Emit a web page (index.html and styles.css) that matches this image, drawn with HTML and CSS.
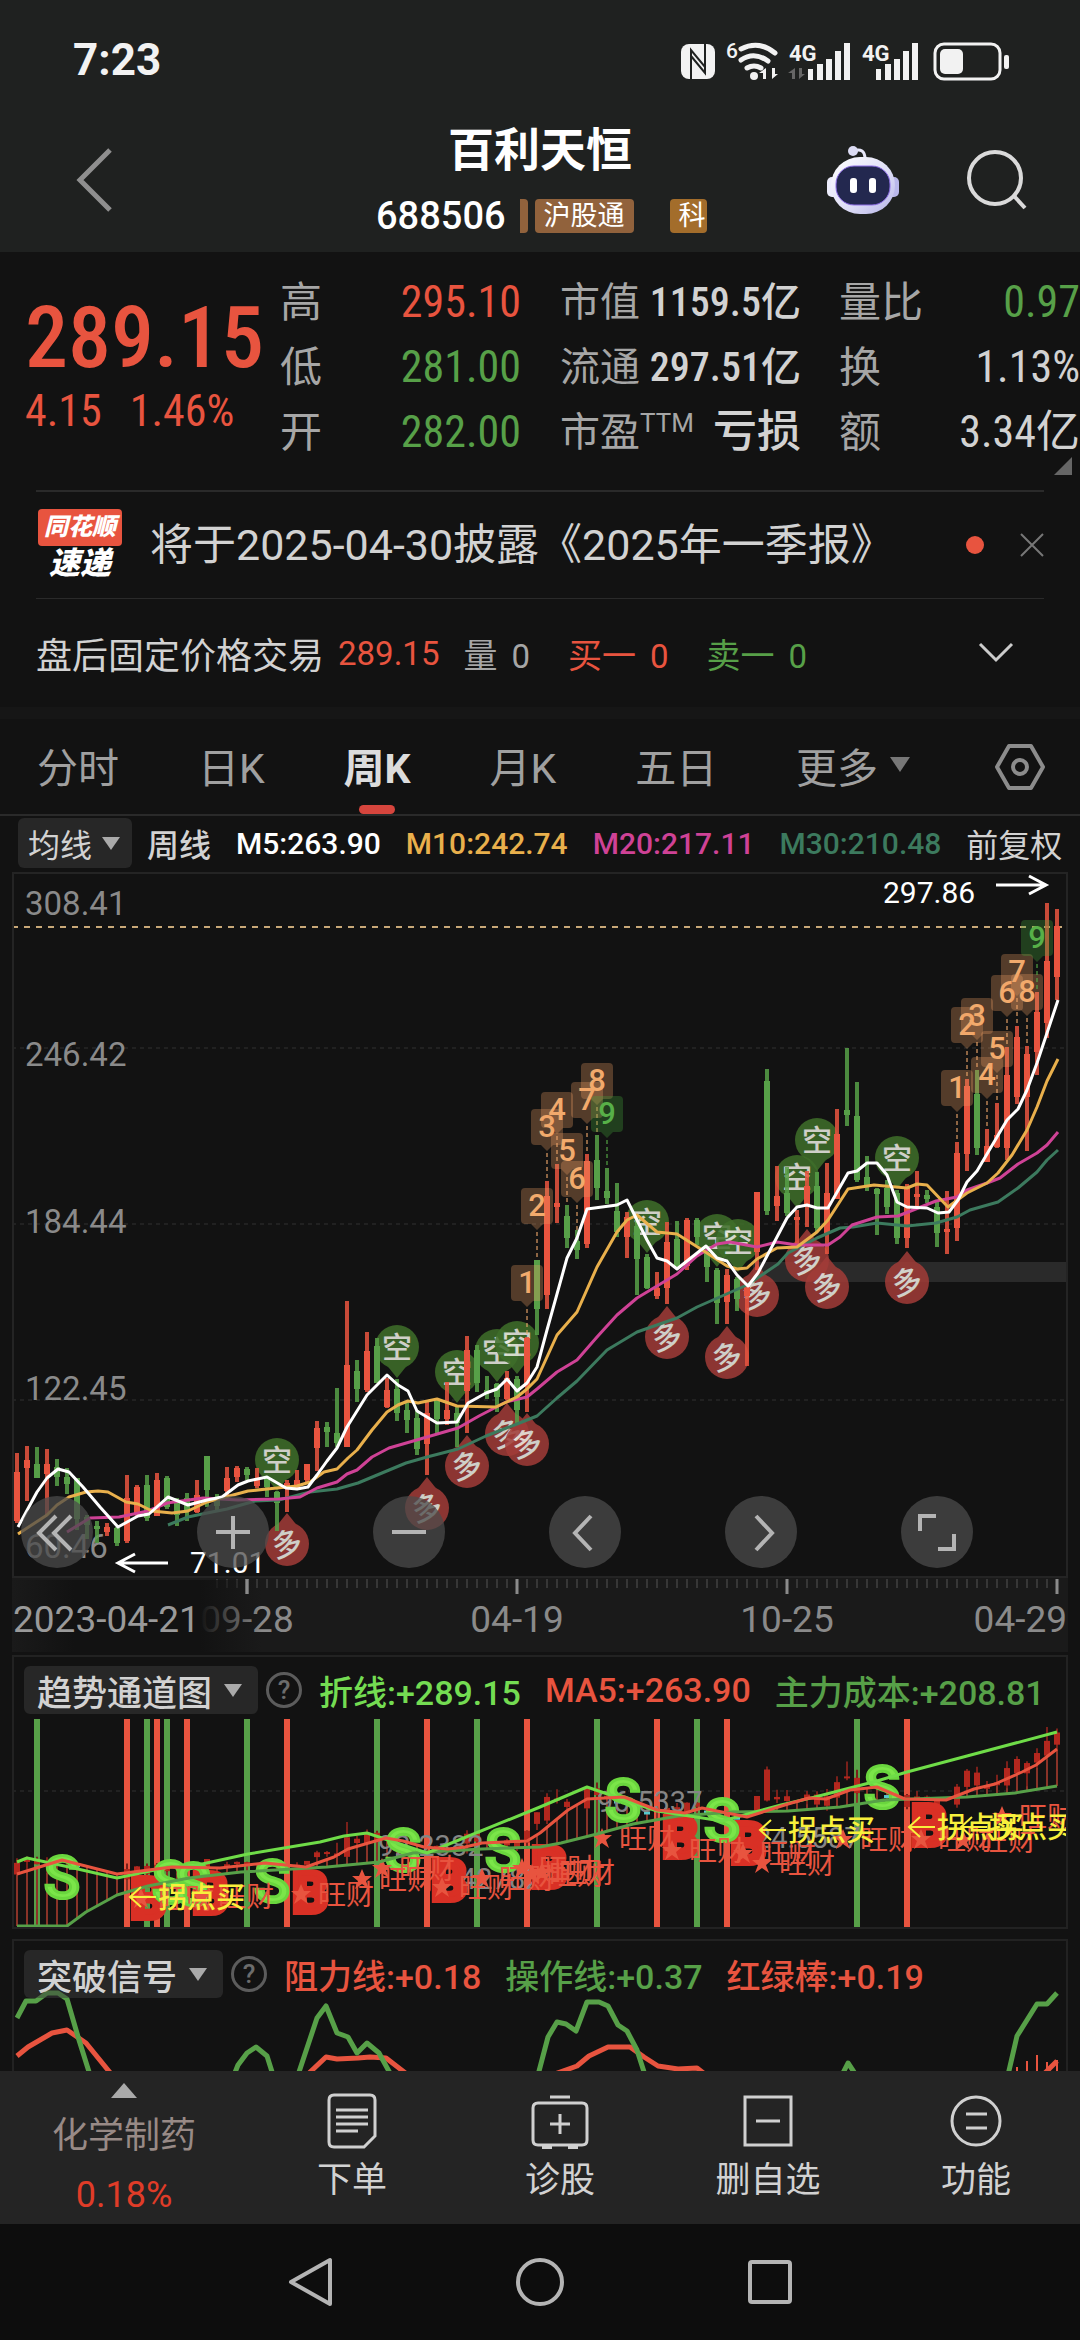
FILE: index.html
```html
<!DOCTYPE html>
<html lang="zh-CN">
<head>
<meta charset="utf-8">
<meta name="viewport" content="width=device-width, initial-scale=1">
<title>百利天恒 688506</title>
<link rel="stylesheet" href="styles.css">
</head>
<body>
<header class="top">
  <div class="status">
    <span class="clock">7:23</span>
    <svg class="status-icons" viewBox="680 36 330 44" aria-hidden="true">
      <g fill="#f2f2f2">
        <rect x="681" y="42" width="34" height="35" rx="8"/>
        <path d="M691 77V48l14 17v-23M705 42v29L691 54" fill="none" stroke="#1f2120" stroke-width="2"/>
        <circle cx="754" cy="74" r="4"/>
        <path d="M766 66v11h-3v-6h-4zM772 66v11l6-5h-3v-6z"/>
        <path d="M808 67h5v11h-5zM817 62h6v16h-6zM826 57h6v21h-6zM835 49h6v29h-6zM844 41h6v37h-6zM876 67h5v11h-5zM885 62h6v16h-6zM894 57h6v21h-6zM903 49h6v29h-6zM912 41h6v37h-6z"/>
        <rect x="940" y="47" width="23" height="25" rx="5"/><rect x="1004" y="53" width="5" height="14" rx="2"/>
        <text x="726" y="56" font-size="21" font-weight="500">6</text>
        <text x="789" y="59" font-size="22" font-weight="700">4G</text>
        <text x="862" y="59" font-size="22" font-weight="700">4G</text>
      </g>
      <path d="M795 66v11h-3v-6h-4zM799 66v11l6-5h-3v-6z" fill="#666"/>
      <g fill="none" stroke="#f2f2f2" stroke-linecap="round">
        <path d="M741 47q18-9 34 4M741 58q13-9 27 1M747 66q7-4 14 0" stroke-width="5"/>
        <rect x="935" y="42" width="65" height="35" rx="9" stroke-width="3"/>
      </g>
    </svg>
  </div>
  <div class="titlebar">
    <button class="icon-btn back" aria-label="返回"><svg width="36" height="64" viewBox="0 0 36 64"><path d="M34 2L4 32l30 30" fill="none" stroke="#8f8f8f" stroke-width="5"/></svg></button>
    <div class="title">
      <h1>百利天恒</h1>
      <div class="code"><span class="code-num">688506</span><i class="sliver"></i><span class="tag">沪股通</span><span class="tag tag-gold">科</span></div>
    </div>
    <button class="icon-btn robot" aria-label="助手"><svg width="74" height="70" viewBox="0 0 74 70">
      <defs><linearGradient id="shell" x1="0" y1="0" x2="1" y2="1"><stop offset="0" stop-color="#fff"/><stop offset=".6" stop-color="#dcdcf6"/><stop offset="1" stop-color="#b4b2e6"/></linearGradient></defs>
      <path d="M27 6q12-4 12 8" fill="none" stroke="#e8e8fa" stroke-width="3"/><circle cx="27" cy="6" r="5" fill="#dcdcf4"/>
      <rect x="1" y="32" width="12" height="20" rx="5" fill="#ececfb"/><rect x="61" y="32" width="12" height="20" rx="5" fill="#b9b7ea"/>
      <rect x="5" y="12" width="64" height="57" rx="29" fill="url(#shell)"/>
      <rect x="10" y="21" width="54" height="39" rx="18" fill="#23284f" stroke="#8f6fe8" stroke-width="1"/>
      <rect x="24" y="33" width="7" height="15" rx="3" fill="#fff"/><rect x="43" y="33" width="7" height="15" rx="3" fill="#fff"/></svg></button>
    <button class="icon-btn" aria-label="搜索"><svg width="62" height="62" viewBox="0 0 62 62"><circle cx="29" cy="29" r="26" fill="none" stroke="#dadada" stroke-width="4"/><path d="M48 47l11 12" stroke="#dadada" stroke-width="4"/></svg></button>
  </div>
</header>

<main>
  <section class="quote">
    <div class="price"><strong>289.15</strong><p><span>4.15</span><span>1.46%</span></p></div>
    <dl>
      <div><dt>高</dt><dd class="up">295.10</dd></div>
      <div><dt>低</dt><dd class="down">281.00</dd></div>
      <div><dt>开</dt><dd class="down">282.00</dd></div>
    </dl>
    <dl class="medium">
      <div><dt>市值</dt><dd>1159.5亿</dd></div>
      <div><dt>流通</dt><dd>297.51亿</dd></div>
      <div><dt>市盈<sup>TTM</sup></dt><dd class="word">亏损</dd></div>
    </dl>
    <dl>
      <div><dt>量比</dt><dd class="down">0.97</dd></div>
      <div><dt>换</dt><dd>1.13%</dd></div>
      <div><dt>额</dt><dd>3.34亿</dd></div>
    </dl>
    <i class="corner"></i>
  </section>

  <section class="notice">
    <div class="logo"><span class="logo-top">同花顺</span><span class="logo-bottom">速递</span></div>
    <a href="#report">将于2025-04-30披露《2025年一季报》</a>
    <i class="dot"></i>
    <button class="icon-btn" aria-label="关闭"><svg width="24" height="24" viewBox="0 0 24 24"><path d="M1 1l22 22M23 1L1 23" stroke="#777" stroke-width="2"/></svg></button>
  </section>

  <section class="after">
    <span class="after-name">盘后固定价格交易</span><span class="num up">289.15</span>
    <span class="pair muted"><b>量</b>0</span><span class="pair up"><b>买一</b>0</span><span class="pair down"><b>卖一</b>0</span>
    <button class="icon-btn expand" aria-label="展开"><svg width="36" height="22" viewBox="0 0 36 22"><path d="M2 2l16 16L34 2" fill="none" stroke="#ccc" stroke-width="3"/></svg></button>
  </section>

  <nav class="tabs">
    <button>分时</button><button>日K</button><button class="active">周K</button><button>月K</button><button>五日</button><button class="more">更多<i class="tri"></i></button>
    <button aria-label="设置" class="gear"><svg width="50" height="46" viewBox="0 0 50 46"><path d="M14 2h22l12 21-12 21H14L2 23z" fill="none" stroke="#8c8c8c" stroke-width="4" stroke-linejoin="round"/><circle cx="25" cy="23" r="7" fill="none" stroke="#8c8c8c" stroke-width="4"/></svg></button>
  </nav>

  <div class="ma-row">
    <button class="pill">均线<i class="tri"></i></button><b>周线</b><span class="ma w">M5:263.90</span><span class="ma y">M10:242.74</span><span class="ma p">M20:217.11</span><span class="ma g">M30:210.48</span><button class="plain">前复权</button>
  </div>

  <section class="kline">
    <svg id="kline" viewBox="14 874 1052 702"></svg>
    <div class="tools">
      <button aria-label="最早"><svg viewBox="0 0 72 72"><path d="M35 20L18 37l17 17M50 20L33 37l17 17"/></svg></button>
      <button aria-label="放大"><svg viewBox="0 0 72 72"><path d="M36 20v33M19 36h34"/></svg></button>
      <button aria-label="缩小"><svg viewBox="0 0 72 72"><path d="M19 36h34"/></svg></button>
      <button aria-label="左移"><svg viewBox="0 0 72 72"><path d="M42 20L26 37l16 17"/></svg></button>
      <button aria-label="右移"><svg viewBox="0 0 72 72"><path d="M31 20l16 17-16 17"/></svg></button>
      <button aria-label="全屏"><svg viewBox="0 0 72 72"><path d="M35 20H19v15M53 38v15H37"/></svg></button>
    </div>
  </section>
  <div class="axis"><svg id="axis" viewBox="12 1576 1056 74"></svg></div>

  <section class="panel">
    <header>
      <button class="pill big">趋势通道图<i class="tri"></i></button><button class="help">?</button>
      <span class="lime">折线:+289.15</span><span class="up">MA5:+263.90</span><span class="down">主力成本:+208.81</span>
    </header>
    <svg id="trend" viewBox="14 1717 1052 210"></svg>
  </section>

  <section class="panel stack">
    <header>
      <button class="pill big">突破信号<i class="tri"></i></button><button class="help">?</button>
      <span class="up">阻力线:+0.18</span><span class="down">操作线:+0.37</span><span class="up">红绿棒:+0.19</span>
    </header>
    <svg id="signal" viewBox="14 1941 1052 132"></svg>
  </section>
</main>

<footer class="bar">
  <a href="#sector" class="sector"><i class="tri-up"></i><span>化学制药</span><em>0.18%</em></a>
  <button><svg width="52" height="56" viewBox="0 0 52 56"><path d="M8 2h36q5 0 5 5v36L38 54H8q-5 0-5-5V7q0-5 5-5z"/><path d="M10 17h32M10 24h32M10 31h32M10 38h22"/></svg>下单</button>
  <button><svg width="60" height="56" viewBox="0 0 60 56"><path d="M20 4h20M8 10h44q5 0 5 5v32q0 5-5 5H8q-5 0-5-5V15q0-5 5-5zM12 55h10M38 55h10M30 21v20M20 31h20"/></svg>诊股</button>
  <button><svg width="52" height="56" viewBox="0 0 52 56"><path d="M3 4h46v48H3zM14 28h24"/></svg>删自选</button>
  <button><svg width="52" height="56" viewBox="0 0 52 56"><circle cx="26" cy="28" r="24"/><path d="M16 21h21M16 35h21"/></svg>功能</button>
</footer>
<nav class="sysnav">
  <button aria-label="返回"><svg width="48" height="50" viewBox="0 0 48 50"><path d="M44 3v44L5 25z" stroke-linejoin="round"/></svg></button>
  <button aria-label="主页"><svg width="48" height="50" viewBox="0 0 48 50"><circle cx="24" cy="25" r="22"/></svg></button>
  <button aria-label="最近"><svg width="48" height="50" viewBox="0 0 48 50"><rect x="4" y="5" width="40" height="40" rx="2"/></svg></button>
</nav>
<script src="charts.js"></script>
</body>
</html>
```

FILE: styles.css
```css
* { box-sizing: border-box; margin: 0; padding: 0; }
:root {
  --up: #e8543f;
  --down: #57a048;
  --din: "Liberation Sans Narrow", "Roboto Condensed", Roboto, "Noto Sans CJK SC", sans-serif;
}
body {
  height: 100vh;
  display: flex;
  flex-direction: column;
  background: #121212;
  color: #d2d2d2;
  font-family: Roboto, "Noto Sans CJK SC", sans-serif;
  overflow: hidden;
}
button { background: none; border: 0; color: inherit; font: inherit; }
a { color: inherit; text-decoration: none; }
svg { display: block; }
svg text { font-family: Roboto, "Noto Sans CJK SC", sans-serif; }
.icon-btn { display: flex; }
.up { color: var(--up); }
.down { color: var(--down); }
.muted { color: #a6a6a6; }
.lime { color: #74dc52; }

.top { background: #1f2120; height: 252px; flex: none; }
.status { display: flex; justify-content: space-between; align-items: center; height: 120px; padding: 0 70px 0 73px; }
.clock { font-size: 44px; font-weight: 700; color: #f2f2f2; }
.status-icons { width: 330px; }
.titlebar { display: flex; align-items: center; height: 120px; padding: 0 52px 0 76px; }
.title { flex: 1; padding-left: 264px; }
.title h1 { font-size: 46px; line-height: 60px; font-weight: 700; color: #fff; padding-left: 72px; }
.code { display: flex; align-items: center; height: 60px; padding-top: 12px; }
.code-num { font-size: 38px; font-weight: 500; color: #fff; margin-right: 14px; }
.sliver { width: 8px; height: 34px; background: #91623c; margin-right: 7px; border-radius: 0 4px 4px 0; }
.tag { height: 34px; line-height: 34px; padding: 0 9px; border-radius: 4px; background: #91623c; color: #fff; font-size: 27px; }
.tag-gold { background: #a36d2b; margin-left: 36px; width: 37px; overflow: hidden; }
.robot { margin-right: 66px; }

.quote { display: flex; position: relative; height: 238px; padding: 18px 0 0 25px; flex: none; }
.price { width: 255px; color: var(--up); }
.price strong { display: block; font: 500 86px/96px var(--din); padding-top: 20px; }
.price p { display: flex; gap: 28px; font: 44px/50px var(--din); }
dl { width: 241px; margin-right: 39px; font-size: 42px; }
dl.medium { font-weight: 500; margin-right: 38px; }
dl div { display: flex; justify-content: space-between; height: 65px; line-height: 65px; }
dt { color: #a6a6a6; font-weight: 400; white-space: nowrap; }
dd { font-family: var(--din); font-size: 44px; }
dl.medium dt { font-size: 40px; }
dl.medium dd { font-size: 40px; }
dl.medium dd.word { font-size: 44px; }
sup { font-size: 26px; line-height: 1px; }
.quote dl:last-of-type { margin-right: 0; }
.corner { position: absolute; right: 8px; bottom: 15px; border: 9px solid transparent; border-right-color: #666; border-bottom-color: #666; }

.notice { display: flex; align-items: center; height: 109px; margin: 0 36px; border: solid #2a2a2a; border-width: 2px 0 1px; flex: none; }
.logo { width: 88px; display: flex; flex-direction: column; align-items: center; font-style: italic; font-weight: 900; color: #fff; }
.logo-top { width: 84px; height: 37px; line-height: 37px; font-size: 24px; text-align: center; background: var(--up); border-radius: 4px; }
.logo-bottom { font-size: 31px; line-height: 36px; }
.notice a { flex: 1; font-size: 43px; padding: 0 0 8px 26px; white-space: nowrap; }
.dot { width: 18px; height: 18px; border-radius: 50%; background: var(--up); margin-right: 36px; }

.after { display: flex; align-items: center; height: 108px; padding: 0 66px 0 36px; font-size: 34px; flex: none; }
.after-name { font-size: 36px; margin-right: 14px; white-space: nowrap; }
.after .num { margin-right: 24px; font-size: 33px; }
.pair { margin-right: 38px; white-space: nowrap; font-size: 33px; }
.pair b { font-weight: 400; font-size: 34px; margin-right: 14px; }
.expand { margin-left: auto; }

.tabs { display: flex; align-items: center; justify-content: space-between; height: 109px; padding: 0 35px 0 37px; border-top: 12px solid #161616; border-bottom: 2px solid #2a2a2a; font-size: 41px; color: #a0a0a0; flex: none; }
.tabs button { height: 95px; padding-bottom: 4px; position: relative; white-space: nowrap; }
.tabs .active { color: #dcdcdc; font-weight: 700; }
.tabs .active::after { content: ""; position: absolute; left: 50%; bottom: 0; width: 36px; height: 9px; margin-left: -18px; border-radius: 5px; background: #d6453d; }
.tabs .more { display: flex; align-items: center; gap: 12px; }
.tabs .gear { display: flex; align-items: center; padding: 0 0 0 6px; }
.tri { border: 10px solid transparent; border-top: 15px solid #777; border-bottom: 0; }

.ma-row { display: flex; align-items: center; gap: 25px; height: 56px; padding: 0 10px 2px 18px; font-size: 32px; flex: none; white-space: nowrap; }
.ma { font-size: 30px; font-weight: 500; }
.ma-row b { font-weight: 500; margin-left: -10px; }
.w { color: #fff; } .y { color: #e9b04c; } .p { color: #cf4296; } .g { color: #3c7a5e; }
.pill { display: flex; align-items: center; flex: none; gap: 10px; height: 50px; padding: 0 12px 0 10px; border-radius: 6px; background: rgba(60, 60, 60, .5); }
.pill .tri { border-width: 13px 9px 0; border-top-color: #aaa; }
.pill.big { height: 48px; padding: 0 16px 0 13px; gap: 12px; font-size: 35px; font-weight: 500; }

.kline { position: relative; margin: 0 12px; border: 2px solid #242424; flex: none; }
.kline > svg, .axis svg, .panel > svg { width: 100%; }
.tools { position: absolute; left: 7px; right: 93px; bottom: 8px; display: flex; justify-content: space-between; }
.tools button { width: 72px; height: 72px; border-radius: 50%; background: rgba(75, 75, 75, .75); }
.tools svg { fill: none; stroke: #b4b4b4; stroke-width: 4; }
.axis { margin: 0 12px; background: #1a1a1a; flex: none; }

.panel { margin: 0 12px 10px; border: 2px solid #222; flex: none; }
.axis + .panel { margin-top: 3px; }
.panel header { display: flex; align-items: center; height: 60px; padding: 8px 10px 2px; font-size: 34px; font-weight: 500; white-space: nowrap; }
.panel header span { margin-right: 24px; }
.help { flex: none; width: 36px; height: 36px; margin: 0 17px 0 8px; border: 3px solid #5c5c5c; border-radius: 50%; color: #6c6c6c; font-size: 26px; line-height: 30px; }
.stack { display: grid; }
.stack > * { grid-area: 1 / 1; }
.stack header { z-index: 1; }

.bar { display: flex; height: 153px; background: #242424; flex: none; z-index: 2; font-size: 35px; margin-top: auto; }
main { flex: 1; min-height: 0; overflow: hidden; display: flex; flex-direction: column; }
.bar > * { flex: 208; display: flex; flex-direction: column; align-items: center; line-height: 42px; padding-top: 22px; gap: 11px; }
.bar .sector { flex: 248; padding-top: 12px; gap: 17px; font-size: 36px; color: #988a86; }
.sector em { font-style: normal; color: #e03c28; }
.tri-up { border: 13px solid transparent; border-bottom: 15px solid #aaa; border-top: 0; }
.bar svg { fill: none; stroke: #d0d0d0; stroke-width: 3; }
.sysnav { display: flex; justify-content: center; gap: 182px; height: 116px; align-items: center; background: #0d0d0d; flex: none; }
.sysnav svg { fill: none; stroke: #b4b4b4; stroke-width: 4; }
```

FILE: charts.js
```js
const UP = '#e8543f', DOWN = '#57a048';
const X = i => 17 + 10 * i;

// Weekly candles: direction, high, body top, body bottom, low (chart units).
const candles = `r1453,1472,1521,1523 r1446,1460,1468,1501 g1447,1464,1478,1478 r1449,1464,1474,1515 g1459,1467,1477,1486
g1468,1477,1484,1494 g1478,1478,1519,1530 g1515,1517,1525,1539 g1521,1526,1528,1543 r1523,1527,1532,1536
g1527,1528,1543,1546 r1475,1498,1541,1543 r1485,1487,1515,1517 g1475,1485,1518,1521 r1473,1480,1516,1516
g1476,1478,1507,1509 g1498,1500,1515,1526 g1493,1498,1510,1521 r1480,1495,1512,1513 g1456,1456,1490,1507
g1494,1500,1506,1510 r1467,1478,1491,1497 r1466,1468,1477,1482 g1467,1469,1475,1480 r1468,1478,1486,1488
g1477,1479,1487,1497 g1491,1492,1503,1531 r1480,1483,1489,1512 r1470,1480,1488,1489 r1464,1464,1480,1482
r1421,1428,1448,1471 g1422,1427,1432,1447 g1388,1433,1443,1447 r1301,1365,1447,1447 g1360,1371,1389,1402
r1332,1351,1390,1392 g1338,1346,1383,1383 r1378,1390,1407,1408 g1379,1389,1413,1421 g1402,1410,1420,1433
g1410,1418,1449,1455 r1402,1413,1444,1475 g1399,1401,1419,1433 r1382,1410,1419,1425 g1407,1413,1423,1447
r1336,1350,1391,1433 g1345,1350,1383,1392 g1376,1390,1393,1399 g1383,1384,1397,1412 r1371,1378,1399,1400
g1376,1379,1410,1423 r1337,1338,1387,1412 g1260,1260,1309,1335 r1181,1196,1295,1309 r1164,1203,1207,1223
g1205,1216,1238,1248 g1230,1241,1250,1259 r1154,1161,1244,1248 g1135,1160,1188,1200 g1168,1191,1198,1204
g1183,1211,1232,1237 r1212,1217,1237,1258 g1217,1226,1259,1295 g1254,1257,1288,1289 r1272,1288,1296,1299
r1222,1242,1288,1304 g1221,1239,1268,1268 r1218,1220,1266,1270 g1218,1220,1237,1245 g1247,1253,1267,1282
g1268,1270,1303,1324 r1269,1275,1302,1324 g1277,1279,1299,1311 r1285,1287,1296,1366 r1192,1192,1252,1270
g1069,1081,1211,1215 r1166,1196,1206,1221 g1167,1193,1213,1216 r1210,1217,1220,1247 r1171,1186,1205,1227
g1172,1186,1228,1232 r1163,1193,1233,1254 r1109,1134,1199,1199 g1048,1110,1115,1126 g1082,1116,1180,1182
g1156,1177,1186,1191 g1188,1189,1194,1235 g1180,1188,1207,1214 g1190,1193,1238,1244 r1184,1188,1238,1248
r1171,1194,1197,1207 g1190,1195,1199,1203 g1202,1207,1233,1247 r1191,1229,1232,1254 r1142,1153,1228,1241
r1079,1086,1154,1171 g1070,1094,1148,1155 r1129,1146,1162,1162 r1103,1135,1147,1148 r1047,1075,1148,1160
r1026,1037,1097,1104 r1046,1054,1097,1151 r992,1012,1052,1075 r903,961,1023,1038 r909,926,977,1000`
  .split(/\s+/).map(s => ({ up: s[0] === 'r', v: s.slice(1).split(',').map(Number) }));

const averages = {
  '#ffffff': '18,1527 37,1492 47,1478 58,1469 69,1472 83,1487 100,1507 118,1527 138,1516 149,1514 168,1497 188,1505 207,1500 222,1497 238,1485 248,1481 267,1477 286,1488 297,1489 308,1487 317,1475 327,1461 337,1448 347,1427 367,1395 387,1375 398,1385 408,1391 417,1411 437,1423 457,1422 468,1403 486,1393 497,1389 507,1379 517,1391 527,1383 537,1367 547,1330 567,1258 577,1238 587,1209 617,1205 627,1200 647,1240 657,1258 667,1261 677,1269 687,1261 706,1246 717,1258 727,1261 737,1275 748,1286 758,1273 787,1218 797,1207 807,1205 817,1208 828,1208 848,1173 857,1171 867,1163 877,1163 887,1175 897,1202 907,1207 927,1208 938,1213 949,1212 958,1200 967,1182 977,1171 997,1137 1007,1120 1018,1109 1027,1090 1037,1063 1047,1033 1058,1000',
  '#e9b04c': '18,1534 47,1515 57,1505 69,1497 86,1492 98,1491 108,1492 126,1502 138,1504 152,1511 172,1513 188,1511 207,1502 222,1498 248,1491 267,1489 297,1486 310,1482 324,1472 337,1469 348,1458 357,1450 372,1430 387,1412 398,1405 408,1401 418,1403 437,1399 457,1406 496,1407 517,1397 527,1389 537,1379 557,1335 577,1312 597,1267 617,1232 627,1220 637,1215 657,1232 677,1234 707,1253 727,1266 737,1269 747,1268 757,1259 777,1248 797,1247 817,1232 828,1220 848,1189 874,1185 907,1188 917,1184 927,1185 948,1207 967,1193 987,1183 998,1173 1012,1155 1027,1130 1037,1107 1047,1081 1058,1059',
  '#cf4296': '67,1532 90,1518 119,1517 148,1511 167,1503 203,1498 238,1500 279,1499 300,1497 317,1488 337,1482 347,1474 357,1470 372,1457 389,1448 427,1437 458,1428 479,1416 506,1402 527,1397 537,1389 557,1372 577,1360 597,1337 617,1315 637,1298 657,1286 677,1274 697,1256 717,1244 730,1242 757,1247 777,1242 797,1245 828,1245 840,1237 852,1225 877,1217 898,1216 936,1201 957,1197 967,1190 987,1183 1000,1178 1018,1164 1037,1153 1047,1145 1058,1132',
  '#3c7a5e': '168,1525 188,1517 207,1513 227,1509 255,1501 279,1500 310,1492 337,1489 358,1483 382,1473 406,1463 427,1457 458,1449 486,1436 517,1424 537,1416 557,1398 577,1381 607,1350 637,1332 677,1318 697,1307 747,1285 778,1264 788,1253 817,1238 840,1228 853,1227 877,1223 907,1226 936,1223 957,1217 970,1210 998,1202 1018,1188 1037,1172 1047,1160 1058,1150'
};

const line = (pts, color, w) => `<polyline points="${pts}" fill="none" stroke="${color}" stroke-width="${w}" stroke-linejoin="round"/>`;
const text = (x, y, size, fill, s, extra = '') => `<text x="${x}" y="${y}" font-size="${size}" fill="${fill}" ${extra}>${s}</text>`;
const dash = (y, color, d, w) => `<path d="M12 ${y}H1066" stroke="${color}" stroke-width="${w}" stroke-dasharray="${d}"/>`;

function candle(c, i) {
  const [h, t, b, l] = c.v, col = c.up ? UP : DOWN, x = X(i);
  return `<path d="M${x} ${h}V${l}" stroke="${col}" stroke-width="4" opacity=".85"/><rect x="${x - 3}" y="${t}" width="6" height="${Math.max(b - t, 3)}" fill="${col}"/>`;
}
function pin(x, y, short) {
  const tail = short ? `M${x - 12} ${y + 16}L${x} ${y + 31}L${x + 12} ${y + 16}z` : `M${x - 12} ${y - 16}L${x} ${y - 31}L${x + 12} ${y - 16}z`;
  const turn = short ? '' : `transform="rotate(-14 ${x} ${y})"`;
  return `<g opacity=".85" fill="${short ? '#3f6f2a' : '#a23c38'}"><circle cx="${x}" cy="${y}" r="22"/><path d="${tail}"/>` +
    text(x, y + 11, 30, '#f0f0e8', short ? '空' : '多', `text-anchor="middle" font-weight="500" ${turn}`) + '</g>';
}
function count(i, top, n) {
  const x = X(i), g = n === 9, hi = candles[i].v[0], fill = g ? 'rgba(70,170,60,.3)' : 'rgba(240,160,100,.3)', ink = g ? '#57b048' : '#f2aa6c';
  return `<path d="M${x - 12} ${top}h24q4 0 4 4v28q0 4-4 4h-6l-6 6-6-6h-6q-4 0-4-4v-28q0-4 4-4z" fill="${fill}"/>` +
    `<path d="M${x} ${top + 44}V${hi}" stroke="${ink}" stroke-width="2" stroke-dasharray="4 3" opacity=".55"/>` +
    text(x, top + 28, 31, ink, n, 'text-anchor="middle" font-weight="500"');
}

const shorts = [[277,1460],[397,1347],[457,1372],[497,1351],[517,1343],[647,1222],[717,1236],[738,1241],[797,1177],[817,1140],[897,1158]];
const longs = [[287,1544],[427,1508],[467,1466],[507,1434],[527,1444],[667,1337],[727,1357],[757,1295],[807,1260],[827,1287],[907,1282]];
const counts = [[51,1265,1],[52,1188,2],[53,1109,3],[54,1092,4],[55,1133,5],[56,1161,6],[57,1082,7],[58,1063,8],[59,1096,9],
  [94,1070,1],[95,1007,2],[96,998,3],[97,1057,4],[98,1031,5],[99,975,6],[100,954,7],[101,974,8],[102,920,9]];

document.getElementById('kline').innerHTML =
  [1048, 1224, 1400].map(y => dash(y, '#303030', '4 4', 1)).join('') +
  '<rect x="753" y="1262" width="315" height="20" fill="#2a2a2a"/>' +
  [['308.41', 915], ['246.42', 1066], ['184.44', 1233], ['122.45', 1400], ['60.46', 1558]].map(([s, y]) => text(25, y, 33, '#8a8a8a', s)).join('') +
  dash(927, '#c8a878', '6 6', 2) +
  shorts.map(p => pin(...p, true)).join('') + longs.map(p => pin(...p, false)).join('') +
  candles.map(candle).join('') +
  counts.map(c => count(...c)).join('') +
  Object.entries(averages).reverse().map(([c, p]) => line(p, c, 3)).join('') +
  text(883, 903, 30, '#fff', '297.86') + text(190, 1573, 30, '#fff', '71.01') +
  '<path d="M996 885h50M1029 876l17 9-17 9M168 1563h-50M135 1554l-17 9 17 9" fill="none" stroke="#fff" stroke-width="3"/>';

let ticks = '';
for (let i = 20; i <= 104; i++) {
  const major = (i - 23) % 27 === 0;
  ticks += `<path d="M${X(i)} 1577v${major ? 15 : 9}" stroke="${major ? '#8a8a8a' : '#555'}" stroke-width="${major ? 3 : 1}"/>`;
}
document.getElementById('axis').innerHTML =
  '<defs><linearGradient id="fade"><stop offset="0" stop-color="#1a1a1a"/><stop offset=".25" stop-color="#121212"/><stop offset=".75" stop-color="#121212"/><stop offset="1" stop-color="#121212" stop-opacity="0"/></linearGradient></defs>' +
  ticks + text(247, 1630, 37, '#8a8a8a', '09-28', 'text-anchor="middle"') +
  '<rect x="12" y="1578" width="250" height="72" fill="url(#fade)"/><path d="M247 1577v15" stroke="#8a8a8a" stroke-width="3"/>' +
  text(13, 1630, 37, '#9a9a9a', '2023-04-21') +
  text(517, 1630, 37, '#8a8a8a', '04-19', 'text-anchor="middle"') +
  text(787, 1630, 37, '#8a8a8a', '10-25', 'text-anchor="middle"') +
  text(1067, 1630, 37, '#8a8a8a', '04-29', 'text-anchor="end"');

// Trend channel
const zig = '17,1862 27,1858 69,1867 117,1878 169,1867 193,1866 248,1854 296,1846 320,1842 344,1836 367,1833 427,1853 540,1807 587,1787 657,1811 722,1821 781,1805 815,1797 877,1781 907,1772 967,1756 1057,1732';
const ma5 = '17,1874 62,1860 117,1874 172,1867 220,1868 265,1863 306,1867 334,1857 348,1849 372,1842 386,1838 403,1841 424,1847 448,1849 465,1847 482,1843 527,1841 540,1833 568,1810 587,1799 624,1797 657,1810 685,1813 702,1808 747,1817 788,1804 809,1798 826,1799 850,1790 877,1787 905,1799 946,1800 974,1789 995,1784 1022,1772 1036,1765 1057,1749';
const cost = '17,1926 67,1926 86,1912 117,1895 148,1886 189,1878 241,1872 327,1867 379,1862 413,1853 482,1849 540,1847 561,1843 597,1834 633,1824 678,1816 733,1812 788,1811 840,1807 884,1800 967,1797 1015,1793 1057,1786';
const parse = s => s.split(' ').map(p => p.split(',').map(Number));
function at(pts, x) {
  for (let k = 1; k < pts.length; k++) {
    if (x <= pts[k][0]) {
      const [a, b] = pts[k - 1], [c, d] = pts[k];
      return b + (d - b) * (x - a) / (c - a);
    }
  }
  return pts[pts.length - 1][1];
}
const ma5p = parse(ma5), costp = parse(cost), small = y => 1727 + (y - 903) * 0.2387;
const trendBars = [[2,0],[11,1],[13,0],[14,1],[15,0],[17,1],[23,0],[27,1],[36,0],[41,1],[46,0],[51,1],[58,0],[64,1],[68,0],[71,1],[84,0],[89,1]];
const sticks = candles.map((c, i) => {
  const x = X(i), m = at(ma5p, x), k = at(costp, x), [h, t, b, l] = c.v.map(small);
  let s = k > m + 3 ? `<path d="M${x} ${m}V${k}" stroke="#8a3328" stroke-width="2"/>` : '';
  if (t < m) s += `<path d="M${x} ${h}V${l}" stroke="#7a201a" stroke-width="2"/><rect x="${x - 3}" y="${t}" width="6" height="${Math.max(b - t, 2)}" fill="#b4271e"/>`;
  else if (!c.up && i % 3 === 0) s += `<rect x="${x - 3}" y="${t}" width="6" height="3" fill="#58c8cc"/>`;
  return s;
}).join('');
const buys = [[148,1898],[210,1893],[310,1892],[449,1880],[549,1867],[680,1837],[748,1843],[929,1825]];
const sells = [[62,1877],[170,1882],[193,1884],[272,1881],[403,1850],[503,1850],[623,1800],[722,1820],[882,1787]];
const stars = [[141,1898],[201,1896],[301,1894],[362,1879],[382,1868],[442,1887],[482,1878],[522,1868],[532,1874],[542,1872],[602,1838],[672,1850],[743,1853],[762,1863],[843,1839],[921,1839],[963,1840],[1002,1816]];
document.getElementById('trend').innerHTML =
  dash(1791, '#303030', '4 4', 1) +
  trendBars.map(([i, up]) => `<rect x="${X(i) - 3}" y="1719" width="6" height="208" fill="${up ? UP : DOWN}"/>`).join('') + sticks +
  [[378,1856,'92.2382'],[460,1889,'42782'],[597,1812,'96.5337'],[755,1848,'24.5587']].map(([x, y, s]) => text(x, y, 29, '#858585', s)).join('') +
  buys.map(([x, y]) => text(x, y + 20, 56, '#d93025', 'B', 'text-anchor="middle" font-weight="700" stroke="#d93025" stroke-width="6"')).join('') +
  sells.map(([x, y]) => text(x, y + 21, 60, '#7be549', 'S', 'text-anchor="middle" font-weight="500" stroke="#6ad63e" stroke-width="3"')).join('') +
  stars.map(([x, y]) => `<path d="M${x} ${y - 10}l3 7h7l-6 5 3 8-7-5-7 5 3-8-6-5h7z" fill="${UP}"/>` + text(x + 17, y + 11, 28, UP, '旺财')).join('') +
  line(cost, '#57a048', 3) + line(zig, '#6fdc48', 3) + line(ma5, UP, 3) +
  [[129,1907],[759,1840],[908,1837],[960,1837]].map(([x, y]) => `<path d="M${x + 27} ${y - 10}h-25M${x + 12} ${y - 20}l-11 10 11 10" fill="none" stroke="#f8f03c" stroke-width="2"/>` + text(x + 29, y + 1, 29, '#f8f03c', '拐点买', 'font-weight="500"')).join('');

// Breakout signal
const green = ['17,2018 26,2001 36,2001 47,1993 58,1993 67,1999 79,2040 90,2075', '234,2075 238,2065 247,2053 256,2047 267,2056 273,2075', '298,2075 317,2018 326,2006 337,2033 348,2037 357,2053 367,2043 379,2053 391,2075', '538,2075 548,2037 557,2022 566,2024 576,2031 587,2002 599,2002 608,2006 618,2025 627,2031 637,2050 645,2075', '842,2075 848,2063 856,2075', '1008,2075 1017,2036 1037,2004 1047,2004 1057,1993'];
const red = ['17,2056 28,2047 52,2033 67,2030 86,2043 112,2075', '307,2075 326,2057 337,2059 358,2058 370,2057 386,2058 408,2075', '552,2075 577,2066 589,2056 608,2047 630,2047 644,2057 658,2066 678,2069 697,2068 706,2075', '1043,2075 1057,2061'];
document.getElementById('signal').innerHTML =
  red.map(p => line(p, UP, 5)).join('') + green.map(p => line(p, DOWN, 5)).join('') +
  [[1017,2067],[1027,2061],[1037,2055],[1047,2062],[1057,2060]].map(([x, y]) => `<path d="M${x} ${y}V2075" stroke="${UP}" stroke-width="2"/>`).join('');
```
